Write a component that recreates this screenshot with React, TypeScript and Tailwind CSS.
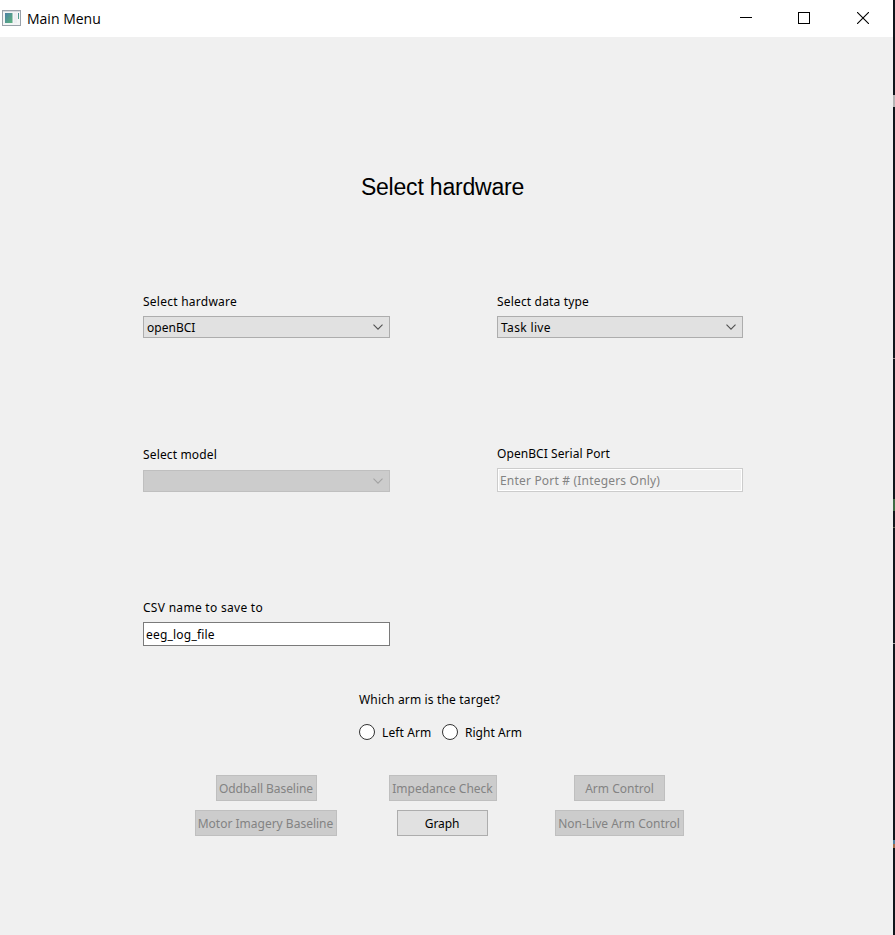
import type { ReactNode } from "react";
import clsx from "clsx";

function AppIcon() {
  return (
    <svg width="19" height="16" viewBox="0 0 19 16" shapeRendering="crispEdges">
      <defs>
        <linearGradient id="pane" x1="0" y1="0" x2="1" y2="1">
          <stop offset="0" stopColor="#4a7fa5" />
          <stop offset="1" stopColor="#5cb47c" />
        </linearGradient>
      </defs>
      <rect x="0.5" y="0.5" width="18" height="15" fill="#f4f5f6" stroke="#9aa2aa" />
      <rect x="1" y="1" width="17" height="1" fill="#d5d9dd" />
      <rect x="3" y="3" width="7" height="10" fill="url(#pane)" />
      <rect x="10" y="3" width="1" height="10" fill="#a9cdbf" />
      <rect x="12" y="3" width="3" height="10" fill="#eceef1" />
      <rect x="16" y="3" width="1" height="6" fill="url(#pane)" />
    </svg>
  );
}

function TitleBar() {
  return (
    <header className="flex h-[37px] shrink-0 items-center bg-white pl-0.5 text-black">
      <div className="-mt-0.5 flex items-center">
        <AppIcon />
        <span className="ml-1.5 mt-0.5 font-['Open_Sans',sans-serif] text-sm leading-5">Main Menu</span>
      </div>
      <div className="-mt-px ml-auto mr-6 flex items-center">
        <svg width="12" height="12" viewBox="0 0 12 12" shapeRendering="crispEdges" className="mr-[46px]">
          <path d="M0 5.5h12" stroke="#000" />
        </svg>
        <svg width="12" height="12" viewBox="0 0 12 12" shapeRendering="crispEdges" className="mr-[47px]">
          <rect x="0.5" y="0.5" width="11" height="11" fill="none" stroke="#000" />
        </svg>
        <svg width="12" height="12" viewBox="0 0 12 12">
          <path d="M0 0L12 12M12 0L0 12" stroke="#000" strokeWidth="1.1" />
        </svg>
      </div>
    </header>
  );
}

function Field({ label, tracking, className, children }: { label: string; tracking: string; className?: string; children: ReactNode }) {
  return (
    <div className={clsx("flex flex-col gap-1.5", className)}>
      <span className={clsx("h-4", tracking)}>{label}</span>
      {children}
    </div>
  );
}

function Select({ value, tracking, disabled }: { value?: string; tracking?: string; disabled?: boolean }) {
  return (
    <div
      className={clsx(
        "flex h-[22px] items-center justify-between border pl-[3px] pr-1.5",
        disabled ? "border-[#bfbfbf] bg-[#cccccc] text-[#a0a0a0]" : "border-[#adadad] bg-[#e1e1e1] text-black",
      )}
    >
      <span className={clsx("pt-0.5", tracking)}>{value}</span>
      <svg width="10" height="6" viewBox="0 0 10 6" fill="none" className={disabled ? "text-[#a3a3a3]" : "text-[#505050]"}>
        <path d="M0.5 0.6L5 5.1L9.5 0.6" stroke="currentColor" strokeWidth="1.1" />
      </svg>
    </div>
  );
}

function Radio({ label, className }: { label: string; className: string }) {
  return (
    <div className={clsx("flex h-4 items-center", className)}>
      <span className="size-4 rounded-full border border-[#333] bg-white" />
      <span className="pt-0.5">{label}</span>
    </div>
  );
}

function Button({ children, className, disabled }: { children: string; className: string; disabled?: boolean }) {
  return (
    <div
      className={clsx(
        "flex h-[26px] items-center justify-center whitespace-nowrap border pt-px",
        disabled ? "border-[#bfbfbf] bg-[#cccccc] text-[#838383]" : "border-[#adadad] bg-[#e1e1e1] pr-px text-black",
        className,
      )}
    >
      {children}
    </div>
  );
}

function DesktopEdge() {
  return (
    <div className="flex w-0.5 shrink-0 flex-col bg-[#10161c]">
      <div className="mt-[95px] h-3 bg-[#b5b5b5]" />
      <div className="mt-[251px] h-px bg-[#8c8082]" />
      <div className="mt-[140px] h-3 bg-[#3f6b45]" />
      <div className="mt-4 h-px bg-[#5c6152]" />
      <div className="mt-[115px] h-px bg-[#a0a0a0]" />
      <div className="mt-[196px] h-1 bg-[#4d7d9c]" />
      <div className="h-1 bg-[#a06a48]" />
    </div>
  );
}

export default function App() {
  return (
    <div className="flex h-[935px] w-[895px] overflow-hidden">
      <div className="flex w-[893px] flex-col bg-[#f0f0f0] font-['Noto_Sans',sans-serif] text-xs leading-4 text-black">
        <TitleBar />
        <h1 className="mt-[136px] w-[885px] text-center font-['Liberation_Sans',Arial,sans-serif] text-[23px] leading-7 tracking-[-0.2px]">
          Select hardware
        </h1>

        <div className="ml-[143px] mt-[93px] grid grid-cols-[247px_246px] gap-x-[107px]">
          <Field label="Select hardware" tracking="tracking-[0.25px]" className="h-[152px]">
            <Select value="openBCI" tracking="tracking-[0.02px]" />
          </Field>
          <Field label="Select data type" tracking="tracking-[0.17px]" className="h-[152px]">
            <Select value="Task live" tracking="tracking-[0.35px]" />
          </Field>
          <Field label="Select model" tracking="tracking-[0.15px]" className="h-[154px] pt-px">
            <div className="pt-px">
              <Select disabled />
            </div>
          </Field>
          <Field label="OpenBCI Serial Port" tracking="tracking-[0.07px]" className="h-[154px]">
            <div className="flex h-6 items-center border border-[#cccccc] bg-[#f0f0f0] pl-0.5 pt-0.5 tracking-[0.19px] text-[#838383] ring-1 ring-inset ring-white">
              Enter Port # (Integers Only)
            </div>
          </Field>
          <Field label="CSV name to save to" tracking="tracking-[0.29px]">
            <div className="flex h-6 items-center border border-[#7a7a7a] bg-white pl-0.5 pt-0.5 tracking-[0.2px]">
              eeg_log_file
            </div>
          </Field>
        </div>

        <div className="ml-[359px] mt-[46px] flex flex-col gap-4">
          <span className="tracking-[0.16px]">Which arm is the target?</span>
          <div className="flex">
            <Radio label="Left Arm" className="w-[83px] gap-[7px] tracking-[0.12px]" />
            <Radio label="Right Arm" className="gap-[7px] tracking-[0.03px]" />
          </div>
        </div>

        <div className="ml-[195px] mt-[35px] grid grid-cols-[142px_108px_129px] items-center justify-items-center gap-x-[52px] gap-y-[9px]">
          <Button disabled className="w-[101px] tracking-[-0.06px]">Oddball Baseline</Button>
          <Button disabled className="w-[108px] pr-px">Impedance Check</Button>
          <Button disabled className="ml-3 w-[91px]">Arm Control</Button>
          <Button disabled className="w-[142px] pr-px">Motor Imagery Baseline</Button>
          <Button className="-ml-px w-[91px] tracking-[-0.1px]">Graph</Button>
          <Button disabled className="ml-3 w-[129px] pr-px">Non-Live Arm Control</Button>
        </div>
      </div>
      <DesktopEdge />
    </div>
  );
}
